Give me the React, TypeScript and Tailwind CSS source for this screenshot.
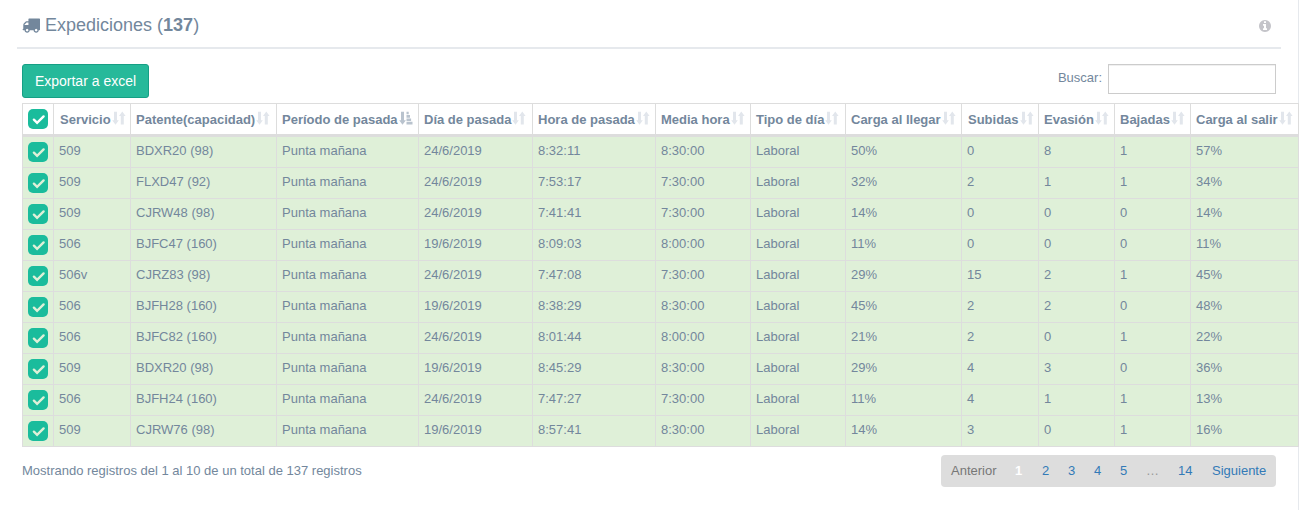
const columns = [
  { label: 'Servicio', pad: 'pl-[6px]' },
  { label: 'Patente(capacidad)', pad: 'pl-[5px]' },
  { label: 'Período de pasada', pad: 'pl-[5px]', sorted: true },
  { label: 'Día de pasada', pad: 'pl-[5px]' },
  { label: 'Hora de pasada', pad: 'pl-[5px]' },
  { label: 'Media hora', pad: 'pl-[5px]' },
  { label: 'Tipo de día', pad: 'pl-[5px]' },
  { label: 'Carga al llegar', pad: 'pl-[5px]' },
  { label: 'Subidas', pad: 'pl-[6px]' },
  { label: 'Evasión', pad: 'pl-[5px]' },
  { label: 'Bajadas', pad: 'pl-[5px]' },
  { label: 'Carga al salir', pad: 'pl-[5px]' },
];

const rows = [
  ['509', 'BDXR20 (98)', 'Punta mañana', '24/6/2019', '8:32:11', '8:30:00', 'Laboral', '50%', '0', '8', '1', '57%'],
  ['509', 'FLXD47 (92)', 'Punta mañana', '24/6/2019', '7:53:17', '7:30:00', 'Laboral', '32%', '2', '1', '1', '34%'],
  ['509', 'CJRW48 (98)', 'Punta mañana', '24/6/2019', '7:41:41', '7:30:00', 'Laboral', '14%', '0', '0', '0', '14%'],
  ['506', 'BJFC47 (160)', 'Punta mañana', '19/6/2019', '8:09:03', '8:00:00', 'Laboral', '11%', '0', '0', '0', '11%'],
  ['506v', 'CJRZ83 (98)', 'Punta mañana', '24/6/2019', '7:47:08', '7:30:00', 'Laboral', '29%', '15', '2', '1', '45%'],
  ['506', 'BJFH28 (160)', 'Punta mañana', '19/6/2019', '8:38:29', '8:30:00', 'Laboral', '45%', '2', '2', '0', '48%'],
  ['506', 'BJFC82 (160)', 'Punta mañana', '24/6/2019', '8:01:44', '8:00:00', 'Laboral', '21%', '2', '0', '1', '22%'],
  ['509', 'BDXR20 (98)', 'Punta mañana', '19/6/2019', '8:45:29', '8:30:00', 'Laboral', '29%', '4', '3', '0', '36%'],
  ['506', 'BJFH24 (160)', 'Punta mañana', '24/6/2019', '7:47:27', '7:30:00', 'Laboral', '11%', '4', '1', '1', '13%'],
  ['509', 'CJRW76 (98)', 'Punta mañana', '19/6/2019', '8:57:41', '8:30:00', 'Laboral', '14%', '3', '0', '1', '16%'],
];

function TruckIcon() {
  return (
    <svg viewBox="0 0 1792 1792" className="h-[18px] w-[18px] shrink-0" fill="currentColor">
      <path d="M640 1408q0-52-38-90t-90-38-90 38-38 90 38 90 90 38 90-38 38-90zm-384-512h384v-256h-158q-13 0-22 9l-195 195q-9 9-9 22v30zm1280 512q0-52-38-90t-90-38-90 38-38 90 38 90 90 38 90-38 38-90zm256-1088v1024q0 15-4 26.5t-13.5 18.5-16.5 11.5-23.5 6-22.5 2-25.5 0-22.5-.5q0 106-75 181t-181 75-181-75-75-181h-384q0 106-75 181t-181 75-181-75-75-181h-64q-3 0-22.5.5t-25.5 0-22.5-2-23.5-6-16.5-11.5-13.5-18.5-4-26.5q0-26 19-45t45-19v-320q0-8-.5-35t0-38 2.5-34.5 6.5-37 14-30.5 22.5-30l198-198q19-19 50.5-32t58.5-13h160v-192q0-26 19-45t45-19h1024q26 0 45 19t19 45z" />
    </svg>
  );
}

function InfoIcon() {
  return (
    <svg viewBox="128 128 1536 1536" className="h-3 w-3 text-[#c4c4c9]" fill="currentColor">
      <path d="M1152 1376v-160q0-14-9-23t-23-9h-96v-512q0-14-9-23t-23-9h-320q-14 0-23 9t-9 23v160q0 14 9 23t23 9h96v320h-96q-14 0-23 9t-9 23v160q0 14 9 23t23 9h448q14 0 23-9t9-23zm-128-896v-160q0-14-9-23t-23-9h-192q-14 0-23 9t-9 23v160q0 14 9 23t23 9h192q14 0 23-9t9-23zm640 416q0 209-103 385.5t-279.5 279.5-385.5 103-385.5-103-279.5-279.5-103-385.5 103-385.5 279.5-279.5 385.5-103 385.5 103 279.5 279.5 103 385.5z" />
    </svg>
  );
}

function SortIcon({ sorted }: { sorted?: boolean }) {
  return sorted ? (
    <svg viewBox="0 0 14 14" className="mt-[7px] ml-px h-[14px] w-[14px] shrink-0 text-[#b9c3ce]" fill="currentColor">
      <path d="M2 .7h3v8.600h1.900l-3.400 4.400L.2 9.300H2zM7.500 .7h2.200v2.600H7.500zM7.500 4H11v2.700H7.500zM7.500 7.400h4.600V10H7.500zM7.500 10.700h6v2.700h-6z" />
    </svg>
  ) : (
    <svg viewBox="0 0 14 14" className="mt-[7px] ml-px h-[14px] w-[14px] shrink-0 text-[#e2e6ec]" fill="currentColor">
      <path d="M2 .7h3v8.600h1.800l-3.300 4.400L.2 9.300H2zM8.800 13.400h3V4.900h1.800L10.300 .5 7 4.900h1.800z" />
    </svg>
  );
}

function Check({ tick }: { tick: string }) {
  return (
    <span role="checkbox" aria-checked="true" className="flex h-5 w-5 items-center justify-center rounded-[5px] bg-[#1abc9c]">
      <svg viewBox="0 0 20 20" className={`h-5 w-5 ${tick}`} fill="none" stroke="currentColor" strokeWidth="2.4" strokeLinecap="round">
        <path d="M5.900 10.700L9.100 13.900L15.600 7.400" />
      </svg>
    </span>
  );
}

export default function App() {
  return (
    <div className="flex h-[510px] w-[1300px] overflow-hidden bg-white font-['Liberation_Sans',Arial,sans-serif] text-[13px] leading-[18px] text-[#73879c]">
      <main className="w-[1299px] shrink-0 border-r border-[#e6e9ed]">
        <header className="ml-[17px] flex h-[49px] w-[1264px] justify-between border-b-2 border-[#e6e9ed] pr-[10px] pl-[5px]">
          <h2 className="flex h-[49px] items-center gap-[5px] text-[18px] leading-[20px]">
            <TruckIcon />
            <span>Expediciones (<strong>137</strong>)</span>
          </h2>
          <div className="pt-5"><InfoIcon /></div>
        </header>

        <div className="ml-[22px] flex h-[54px] w-[1254px] justify-between pt-[15px]">
          <button className="h-[34px] w-[127px] rounded-[3px] border border-[#169f85] bg-[#26b99a] text-[14px] text-white">Exportar a excel</button>
          <label className="flex h-[30px] gap-[6px]">
            <span className="pt-[5px]">Buscar:</span>
            <input className="h-[30px] w-[168px] border border-[#ccc] bg-white px-2 shadow-[inset_0_1px_0_#f0f0f0] outline-none" />
          </label>
        </div>

        <table className="ml-[22px] w-[1277px] table-fixed border-separate border-spacing-0 border-r border-[#ddd]">
          <colgroup>
            <col className="w-[31px]" />
            <col className="w-[77px]" />
            <col className="w-[146px]" />
            <col className="w-[142px]" />
            <col className="w-[114px]" />
            <col className="w-[123px]" />
            <col className="w-[95px]" />
            <col className="w-[95px]" />
            <col className="w-[116px]" />
            <col className="w-[77px]" />
            <col className="w-[76px]" />
            <col className="w-[76px]" />
            <col className="w-[108px]" />
          </colgroup>
          <thead>
            <tr className="h-[34px]">
              <th className="border-t border-b-3 border-l border-[#ddd] p-0 pl-[5px]"><Check tick="text-white" /></th>
              {columns.map((c) => (
                <th key={c.label} className={`border-t border-b-3 border-l border-[#ddd] p-0 align-top font-bold whitespace-nowrap ${c.pad}`}>
                  <div className="flex h-[30px]">
                    <span className="pt-[7px]">{c.label}</span>
                    <SortIcon sorted={c.sorted} />
                  </div>
                </th>
              ))}
            </tr>
          </thead>
          <tbody>
            {rows.map((row, i) => (
              <tr key={i} className="h-[31px] bg-[#dff0d8]">
                <td className="border-b border-l border-[#ddd] p-0 pl-[5px]"><Check tick="text-[#dff0d8]" /></td>
                {row.map((value, j) => (
                  <td key={j} className="border-b border-l border-[#ddd] p-0 pt-[5px] pl-[5px] align-top whitespace-nowrap">{value}</td>
                ))}
              </tr>
            ))}
          </tbody>
        </table>

        <footer className="ml-[22px] flex w-[1254px] justify-between pt-2">
          <p className="pt-[7px]">Mostrando registros del 1 al 10 de un total de 137 registros</p>
          <nav className="flex h-8 w-[335px] rounded-[4px] bg-[#ddd] pt-[7px] pl-[10px] text-[#337ab7]">
            <span className="w-[64px] text-[#777]">Anterior</span>
            <span className="w-[27px] font-bold text-white">1</span>
            <a className="w-[26px]">2</a>
            <a className="w-[26px]">3</a>
            <a className="w-[26px]">4</a>
            <a className="w-[26px]">5</a>
            <span className="w-[32px] text-[#999]">…</span>
            <a className="w-[34px]">14</a>
            <a>Siguiente</a>
          </nav>
        </footer>
      </main>
    </div>
  );
}
